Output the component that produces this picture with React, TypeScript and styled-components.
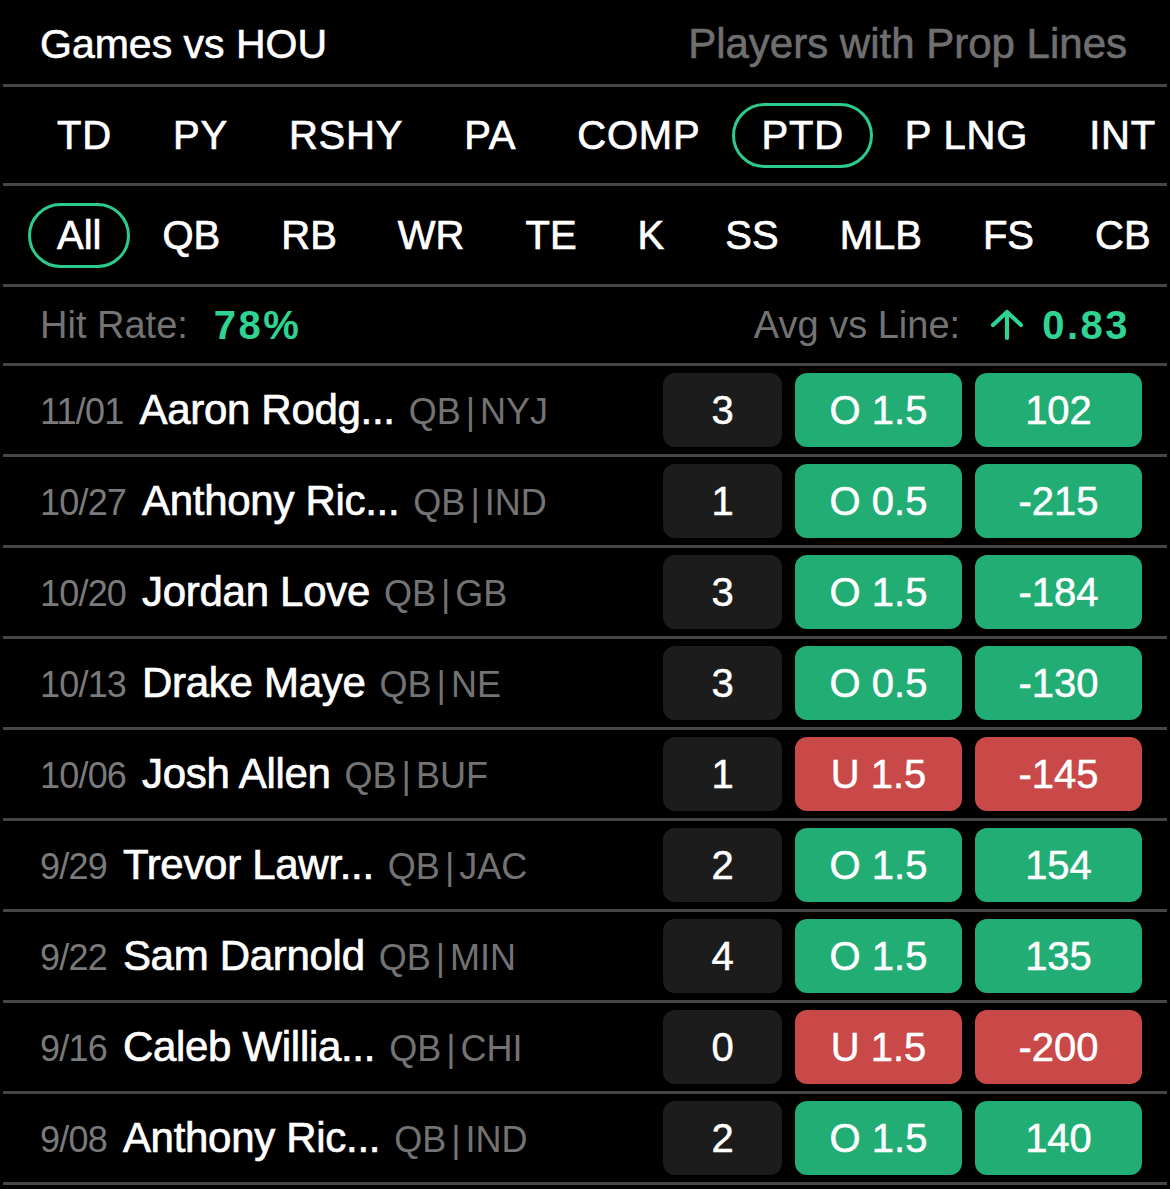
import React from "react";
import styled, { createGlobalStyle } from "styled-components";

const GlobalStyle = createGlobalStyle`
  html, body {
    margin: 0;
    padding: 0;
    background: #000;
  }
  body {
    font-family: "Liberation Sans", Arial, sans-serif;
    color: #fff;
  }
`

const Page = styled.div`
  width: 1170px;
  height: 1189px;
  padding: 0 3px;
  box-sizing: border-box;
  background: #000;
  overflow: hidden;
`

const Section = styled.div<{ $h: number }>`
  height: ${p => p.$h}px;
  border-bottom: 3px solid #464646;
  display: flex;
  align-items: center;
  box-sizing: content-box;
`

const Header = styled(Section)`
  justify-content: space-between;
  padding: 0 40px 0 37px;
`

const Title = styled.div`
  font-size: 41px;
  -webkit-text-stroke: 0.6px #fff;
  padding-top: 4px;
`

const SubTitle = styled.div`
  font-size: 42px;
  color: #6f6f6f;
  -webkit-text-stroke: 0.6px #6f6f6f;
  padding-top: 4px;
`

const TabRow = styled(Section)<{ $spacing: number }>`
  padding-left: 25px;
  gap: 3px;
  overflow: hidden;
  white-space: nowrap;
  letter-spacing: ${p => p.$spacing}px;
`

const Tab = styled.div<{ $active?: boolean }>`
  height: 65px;
  box-sizing: border-box;
  display: flex;
  align-items: center;
  padding: 0 26px;
  border: 3px solid ${p => (p.$active ? "#2ccb8b" : "transparent")};
  border-radius: 40px;
  font-size: 40px;
  -webkit-text-stroke: 0.7px #fff;
  flex-shrink: 0;
`

const StatRow = styled(Section)`
  justify-content: space-between;
  padding: 0 37px 0 37px;
  font-size: 38px;
`

const StatGroup = styled.div`
  display: flex;
  align-items: center;
`

const Label = styled.span<{ $gap: number }>`
  color: #737373;
  margin-right: ${p => p.$gap}px;
`

const GreenValue = styled.span`
  color: #2fd492;
  font-weight: 700;
  font-size: 40px;
  letter-spacing: 2.5px;
`

const ArrowIcon = styled.svg`
  width: 34px;
  height: 32px;
  margin-right: 18px;
`

const GameRow = styled(Section)`
  padding: 0 25px 0 37px;
`

const PlayerInfo = styled.div`
  flex: 1;
  display: flex;
  align-items: baseline;
  white-space: nowrap;
  overflow: hidden;
`

const Date = styled.span`
  font-size: 36px;
  color: #7a7a7a;
  margin-right: 16px;
  letter-spacing: -0.8px;
`

const Name = styled.span`
  font-size: 42px;
  -webkit-text-stroke: 0.7px #fff;
  margin-right: 14px;
  letter-spacing: -0.3px;
`

const Meta = styled.span`
  font-size: 36px;
  color: #737373;
  word-spacing: -5px;
`

const Boxes = styled.div`
  display: flex;
  gap: 13px;
`

const Box = styled.div<{ $w: number; $tone: "dark" | "hit" | "miss" }>`
  width: ${p => p.$w}px;
  height: 74px;
  border-radius: 12px;
  display: flex;
  align-items: center;
  justify-content: center;
  font-size: 40px;
  -webkit-text-stroke: 0.5px #fff;
  background: ${p =>
    p.$tone === "dark" ? "#1c1c1c" : p.$tone === "hit" ? "#21ad73" : "#c94848"};
`

type Game = {
  date: string;
  name: string;
  meta: string;
  value: number;
  line: string;
  odds: string;
  hit: boolean;
}

const games: Game[] = [
  { date: "11/01", name: "Aaron Rodg...", meta: "QB | NYJ", value: 3, line: "O 1.5", odds: "102", hit: true },
  { date: "10/27", name: "Anthony Ric...", meta: "QB | IND", value: 1, line: "O 0.5", odds: "-215", hit: true },
  { date: "10/20", name: "Jordan Love", meta: "QB | GB", value: 3, line: "O 1.5", odds: "-184", hit: true },
  { date: "10/13", name: "Drake Maye", meta: "QB | NE", value: 3, line: "O 0.5", odds: "-130", hit: true },
  { date: "10/06", name: "Josh Allen", meta: "QB | BUF", value: 1, line: "U 1.5", odds: "-145", hit: false },
  { date: "9/29", name: "Trevor Lawr...", meta: "QB | JAC", value: 2, line: "O 1.5", odds: "154", hit: true },
  { date: "9/22", name: "Sam Darnold", meta: "QB | MIN", value: 4, line: "O 1.5", odds: "135", hit: true },
  { date: "9/16", name: "Caleb Willia...", meta: "QB | CHI", value: 0, line: "U 1.5", odds: "-200", hit: false },
  { date: "9/08", name: "Anthony Ric...", meta: "QB | IND", value: 2, line: "O 1.5", odds: "140", hit: true },
]

const statTabs = ["TD", "PY", "RSHY", "PA", "COMP", "PTD", "P LNG", "INT"]
const positions = ["All", "QB", "RB", "WR", "TE", "K", "SS", "MLB", "FS", "CB"]

export default function App() {
  return (
    <Page>
      <GlobalStyle />
      <Header $h={84}>
        <Title>Games vs HOU</Title>
        <SubTitle>Players with Prop Lines</SubTitle>
      </Header>

      <TabRow $h={96} $spacing={0.8}>
        {statTabs.map(t => (
          <Tab key={t} $active={t === "PTD"}>{t}</Tab>
        ))}
      </TabRow>

      <TabRow $h={98} $spacing={0}>
        {positions.map(p => (
          <Tab key={p} $active={p === "All"}>{p}</Tab>
        ))}
      </TabRow>

      <StatRow $h={76}>
        <StatGroup>
          <Label $gap={26}>Hit Rate:</Label>
          <GreenValue>78%</GreenValue>
        </StatGroup>
        <StatGroup>
          <Label $gap={30}>Avg vs Line:</Label>
          <ArrowIcon viewBox="0 0 34 32" fill="none" stroke="#2fd492" strokeWidth="4.2" strokeLinecap="round" strokeLinejoin="round">
            <path d="M3 16 L17 3 L31 16" />
            <path d="M17 4 V29" />
          </ArrowIcon>
          <GreenValue>0.83</GreenValue>
        </StatGroup>
      </StatRow>

      {games.map((g, i) => (
        <GameRow $h={88} key={i}>
          <PlayerInfo>
            <Date>{g.date}</Date>
            <Name>{g.name}</Name>
            <Meta>{g.meta}</Meta>
          </PlayerInfo>
          <Boxes>
            <Box $w={119} $tone="dark">{g.value}</Box>
            <Box $w={167} $tone={g.hit ? "hit" : "miss"}>{g.line}</Box>
            <Box $w={167} $tone={g.hit ? "hit" : "miss"}>{g.odds}</Box>
          </Boxes>
        </GameRow>
      ))}
    </Page>
  )
}
